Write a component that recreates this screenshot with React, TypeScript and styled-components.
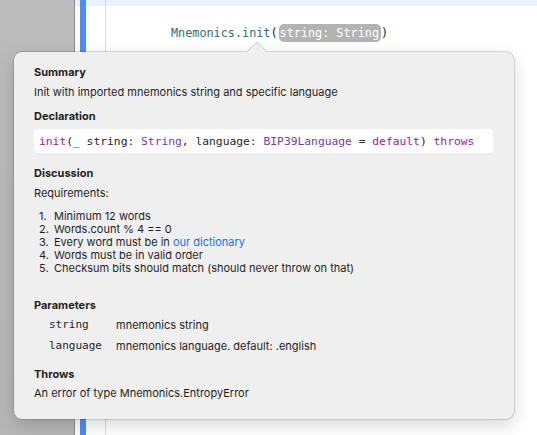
import React from "react";
import styled, { createGlobalStyle } from "styled-components";

const Global = createGlobalStyle`
  html, body { margin: 0; padding: 0; }
  body { width: 537px; height: 435px; overflow: hidden; background: #fff; font-family: Inter, "Noto Sans", sans-serif; }
`;

const Page = styled.div`
  position: relative;
  display: flex;
  width: 537px;
  height: 435px;
  overflow: hidden;
`;

const Sidebar = styled.div`
  width: 74px;
  background: linear-gradient(#bcbcbc, #b6b6b6);
  border-right: 1px solid #8c8c8c;
`;

const BandColumn = styled.div<{ $w?: number }>`
  ${(p) => (p.$w ? `width: ${p.$w}px;` : "flex: 1;")}
  background: linear-gradient(#e9f1fd 0 6px, #ffffff 6px);
`;

const ChangeBar = styled.div`
  width: 6px;
  background: #4d8df6;
`;

const GutterLine = styled.div`
  width: 1px;
  background: #d9d9d9;
`;

const CodeArea = styled.div`
  flex: 1;
  background: linear-gradient(#e9f1fd 0 6px, #ffffff 6px);
  padding: 24px 0 0 65px;
`;

const CodeLine = styled.div`
  display: flex;
  align-items: center;
  font-family: "DejaVu Sans Mono", monospace;
  font-size: 11.8px;
  line-height: 18px;
  color: #326d74;
  white-space: pre;
`;

const Paren = styled.span`
  color: #262626;
`;

const Placeholder = styled.span`
  background: #b3b3b3;
  color: #ffffff;
  border-radius: 5px;
  padding: 0 2px 0 1px;
  margin-left: 1px;
  line-height: 18px;
`;

const Popover = styled.div`
  position: absolute;
  left: 14px;
  top: 52px;
  width: 500px;
  height: 367px;
  box-sizing: border-box;
  background: #efefef;
  border-radius: 8px;
  box-shadow: 0 0 0 0.5px rgba(0, 0, 0, 0.28), 0 6px 18px rgba(0, 0, 0, 0.16);
  padding: 13px 20px 0 20px;
  color: #1f1f1f;
  font-size: 11px;
`;

const Arrow = styled.div`
  position: absolute;
  left: 236px;
  top: -7px;
  width: 14px;
  height: 14px;
  background: #efefef;
  transform: rotate(45deg);
  border-top-left-radius: 3px;
  box-shadow: -0.5px -0.5px 0 0 rgba(0, 0, 0, 0.25);
`;

const Heading = styled.div<{ $mt?: number }>`
  position: relative;
  font-weight: 700;
  line-height: 14px;
  margin-top: ${(p) => p.$mt ?? 0}px;
`;

const Text = styled.div<{ $mt?: number }>`
  line-height: 14px;
  margin-top: ${(p) => p.$mt ?? 0}px;
`;

const CodeBox = styled.div`
  margin-top: 6px;
  height: 24px;
  width: 459px;
  box-sizing: border-box;
  background: #ffffff;
  border-radius: 4px;
  padding-left: 5px;
  display: flex;
  align-items: center;
  font-family: "DejaVu Sans Mono", monospace;
  font-size: 11.3px;
  color: #262626;
  white-space: pre;
`;

const Kw = styled.span`
  color: #9b2393;
`;

const Ty = styled.span`
  color: #703daa;
`;

const List = styled.ol`
  list-style: none;
  margin: 10px 0 0 0;
  padding: 0;
`;

const Item = styled.li`
  display: flex;
  line-height: 13px;
`;

const Num = styled.span`
  width: 20px;
  padding-left: 5px;
  box-sizing: border-box;
`;

const Link = styled.span`
  color: #1f6fd8;
`;

const Params = styled.div`
  margin-top: 6px;
  display: grid;
  grid-template-columns: 67px 1fr;
  row-gap: 7px;
  padding-left: 15px;
  line-height: 14px;
`;

const ParamName = styled.span`
  font-family: "DejaVu Sans Mono", monospace;
  font-size: 11px;
`;

const items: React.ReactNode[] = [
  "Minimum 12 words",
  "Words.count % 4 == 0",
  <>Every word must be in <Link>our dictionary</Link></>,
  "Words must be in valid order",
  "Checksum bits should match (should never throw on that)",
];

export default function App() {
  return (
    <>
      <Global />
      <Page>
        <Sidebar />
        <BandColumn $w={5} />
        <ChangeBar />
        <BandColumn $w={19} />
        <GutterLine />
        <CodeArea>
          <CodeLine>
            Mnemonics.init<Paren>(</Paren>
            <Placeholder>string: String</Placeholder>
            <Paren>)</Paren>
          </CodeLine>
        </CodeArea>
        <Popover>
          <Arrow />
          <Heading>Summary</Heading>
          <Text $mt={6}>Init with imported mnemonics string and specific language</Text>
          <Heading $mt={10}>Declaration</Heading>
          <CodeBox>
            <Kw>init</Kw>(_ string: <Ty>String</Ty>, language: <Ty>BIP39Language</Ty> = <Kw>default</Kw>) <Kw>throws</Kw>
          </CodeBox>
          <Heading $mt={13}>Discussion</Heading>
          <Text $mt={6}>Requirements:</Text>
          <List>
            {items.map((it, i) => (
              <Item key={i}>
                <Num>{i + 1}.</Num>
                <span>{it}</span>
              </Item>
            ))}
          </List>
          <Heading $mt={23}>Parameters</Heading>
          <Params>
            <ParamName>string</ParamName>
            <span>mnemonics string</span>
            <ParamName>language</ParamName>
            <span>mnemonics language. default: .english</span>
          </Params>
          <Heading $mt={14}>Throws</Heading>
          <Text $mt={5}>An error of type Mnemonics.EntropyError</Text>
        </Popover>
      </Page>
    </>
  );
}
